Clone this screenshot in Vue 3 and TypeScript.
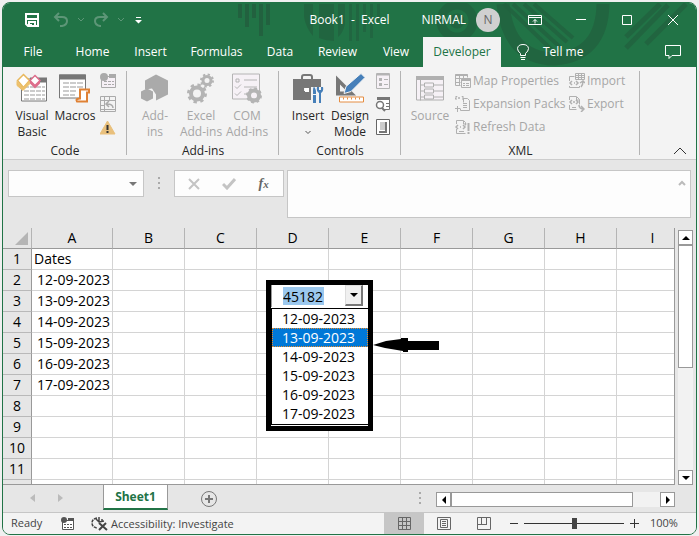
<script setup lang="ts">
import { ref } from 'vue'

const tabs = ['File', 'Home', 'Insert', 'Formulas', 'Data', 'Review', 'View', 'Developer']
const activeTab = ref('Developer')
const columns = ['A', 'B', 'C', 'D', 'E', 'F', 'G', 'H', 'I']
const dates = ['12-09-2023', '13-09-2023', '14-09-2023', '15-09-2023', '16-09-2023', '17-09-2023']
const rows = Array.from({ length: 11 }, (_, i) => ({
  number: i + 1,
  value: i === 0 ? 'Dates' : dates[i - 1] ?? '',
}))
const selected = ref('13-09-2023')
const comboValue = ref('45182')
const zoom = ref(100)
</script>

<template>
  <div class="window">
    <header class="top">
      <svg class="pattern" width="480" height="65" viewBox="216 2 480 65" aria-hidden="true">
        <g fill="#22613f">
          <path d="M238 3h4v14h-4zM245 3h4v23h-4zM252 3h4v14h-4zM259 3h4v32h-4zM266 3h4v21h-4z" />
          <path d="M304 3h9v32q-7-8-9-19zM319 3h15v37q-8 0-15-3zM338 3h7v20q-2 9-7 13z" opacity=".8" />
          <path d="M349 3h3v37h-3zM356 3h3v37h-3zM363 3h3v28h-3zM370 3h3v34h-3zM377 3h3v17h-3z" opacity=".7" />
        </g>
        <g fill="none" stroke="#22613f">
          <circle cx="457" cy="20" r="16" stroke-width="9" opacity=".8" />
          <circle cx="457" cy="20" r="5" stroke-width="5" opacity=".8" />
          <path d="M503 3q5 54 51 55q48-3 49-55" stroke-width="13" opacity=".8" />
          <path d="M504 3l50 48M513 3l47 43M524 3l43 38M534 3l39 34" stroke-width="4" opacity=".8" />
          <path d="M626 47l42-43M646 43l40-40M660 3l-34 33" stroke-width="5" opacity=".8" />
        </g>
      </svg>
      <div class="titlebar">
        <div class="quick">
          <button aria-label="Save" class="save"><svg width="16" height="16" viewBox="0 0 16 16" fill="none" stroke="#fff" stroke-width="2"><path d="M2 2h12v12H4l-2-2zM3 7h10M5 14v-4h6v4" /><path d="M7 12v2" /></svg></button>
          <button aria-label="Undo" class="faded"><svg width="16" height="16" viewBox="0 0 16 16" fill="none" stroke="currentColor" stroke-width="2"><path d="M6 1L2 5l4 4M2 5h7q5 0 5 4t-5 5H7" /></svg></button>
          <button aria-label="Undo history" class="faded small"><svg width="6" height="4" viewBox="0 0 6 4" fill="none" stroke="currentColor"><path d="M0 0l3 3 3-3" /></svg></button>
          <button aria-label="Redo" class="faded"><svg width="16" height="16" viewBox="0 0 16 16" fill="none" stroke="currentColor" stroke-width="2"><path d="M10 1l4 4-4 4M14 5H7Q2 5 2 9t5 5h1" /></svg></button>
          <button aria-label="Redo history" class="faded small"><svg width="6" height="4" viewBox="0 0 6 4" fill="none" stroke="currentColor"><path d="M0 0l3 3 3-3" /></svg></button>
          <button aria-label="Customize toolbar" class="custom"><svg width="7" height="7" viewBox="0 0 7 7" fill="#fff"><path d="M1 0h5v1H1zM0 3h7L3.500 6.500z" /></svg></button>
        </div>
        <div class="title">Book1&nbsp; -&nbsp; Excel</div>
        <div class="right">
          <button class="account"><span>NIRMAL</span><span class="avatar">N</span></button>
          <button class="win" aria-label="Ribbon display"><svg width="14" height="12" viewBox="0 0 14 12" fill="none" stroke="#fff"><path d="M.5 1.500h13v9H.5zM.5 3.500h13M7 9.500v-4M5 7.500l2-2 2 2" /></svg></button>
          <button class="win" aria-label="Minimize"><svg width="12" height="12" viewBox="0 0 12 12" stroke="#fff"><path d="M1 5.500h10" /></svg></button>
          <button class="win" aria-label="Maximize"><svg width="12" height="12" viewBox="0 0 12 12" fill="none" stroke="#fff"><path d="M1.500 1.500h9v9h-9z" /></svg></button>
          <button class="win" aria-label="Close"><svg width="12" height="12" viewBox="0 0 12 12" stroke="#fff"><path d="M1 1l10 10M11 1L1 11" /></svg></button>
        </div>
      </div>
      <nav class="tabs">
        <button v-for="t in tabs" :key="t" :class="{ active: t === activeTab }" @click="activeTab = t">{{ t }}</button>
        <button class="tell"><svg width="14" height="18" viewBox="0 0 14 18" fill="none" stroke="#fff"><path d="M4.500 12.500v-2Q1.500 8 1.500 5.500 2 1.500 7 1.500t5.500 4Q12.500 8 9.500 10.500v2zM4.500 14.500h5M5 16.500h4" /></svg>Tell me</button>
        <button class="comment" aria-label="Comments"><svg width="17" height="16" viewBox="0 0 17 16" fill="none" stroke="#fff"><path d="M.5 1.500h15v10H7l-3 3v-3H.5z" /></svg></button>
      </nav>
    </header>

    <section class="ribbon">
      <div class="group code">
        <div class="tools">
          <button class="big">
            <svg width="32" height="30" viewBox="0 0 32 30"><path d="M5.500 5.500h25v22h-25z" fill="#fff" stroke="#777" /><path d="M14 4h17v5H14z" fill="#777" /><path d="M8 13.500h21M8 17.500h21M8 21.500h21M8 25.500h21" stroke="#999" stroke-dasharray="5 1" /><path d="M7.500 1l6 6-6 7-6-7z" fill="#fff" stroke="#e8b85c" stroke-width="1.500" /><path d="M1 8l6 6 7-7v3l-7 7-6-5z" fill="#edc06b" stroke="#edc06b" /><path d="M19 2l5 5-5 5-5-5z" fill="#fff" stroke="#dd6e8c" stroke-width="1.500" /><path d="M14 7l5 5 5-5v3l-5 5-5-5z" fill="#dd6e8c" /></svg>
            <span>Visual<br>Basic</span>
          </button>
          <button class="big">
            <svg width="32" height="30" viewBox="0 0 32 30"><path d="M.5 1.500h26v23H.5z" fill="#fff" stroke="#777" /><path d="M0 1h27v5H0z" fill="#777" /><path d="M4 9.500h20M4 13.500h20M4 17.500h13M4 21.500h12" stroke="#999" stroke-dasharray="6 1" /><path d="M21 16h9v3h-2v9H18q-2-3 3-3z" fill="#fff" stroke="#df8135" stroke-width="2" /></svg>
            <span>Macros</span>
          </button>
          <div class="minis">
            <button aria-label="Record Macro"><svg width="16" height="16" viewBox="0 0 16 16"><path d="M1.500 3.500h14v11h-14z" fill="#f6f0f6" stroke="#aaa" /><path d="M9 1h7v4H9z" fill="#aaa" /><path d="M4 8.500h10M4 11.500h10" stroke="#aaa" stroke-dasharray="3 1" /><circle cx="4" cy="4" r="4" fill="#aaa" /></svg></button>
            <button aria-label="Relative references"><svg width="16" height="16" viewBox="0 0 16 16" fill="none" stroke="#aaa"><path d="M.5.5h15v15H.5zM4.500 0v16M0 4.500h16M9.500 0v4M0 9.500h4M0 13.500h16" /><path d="M13 12q0-4-6-4M9 5L6 8l3 3" stroke-width="1.500" /></svg></button>
            <button aria-label="Macro Security"><svg width="16" height="15" viewBox="0 0 16 15"><path d="M7.500 1L15 14H0z" fill="#e9c07c" stroke="#e9c07c" stroke-linejoin="round" /><path d="M6.500 5h2v5h-2zM6.500 11h2v2h-2z" fill="#333" /></svg></button>
          </div>
        </div>
        <div class="label">Code</div>
      </div>
      <div class="group addins">
        <div class="tools dim">
          <button class="big" disabled><svg width="28" height="30" viewBox="0 0 28 30" fill="#aaa"><path d="M15 1l12 6v14l-12 6V21l-4-6-7 1V7z" /><path d="M6 15l6 3v7l-6 3-6-3v-7z" /></svg><span>Add-<br>ins</span></button>
          <button class="big" disabled><svg width="28" height="30" viewBox="0 0 28 30" fill="none" stroke="#b4b4b4"><circle cx="10" cy="20" r="6" stroke-width="4" /><circle cx="10" cy="20" r="8.500" stroke-width="3" stroke-dasharray="3.300 3.400" /><circle cx="20" cy="7" r="4" stroke-width="3" /><circle cx="20" cy="7" r="6" stroke-width="2" stroke-dasharray="2.300 2.400" /></svg><span>Excel<br>Add-ins</span></button>
          <button class="big" disabled><svg width="32" height="30" viewBox="0 0 32 30" fill="none" stroke="#b4b4b4"><path d="M1.500.5h27v25h-27z" fill="#f6f1f6" /><path d="M13 6.500h13M13 13.500h13M13 20.500h5M5 5.500h3v3H5zM4 13l2 2 4-4M4 20l2 2 4-4" /><circle cx="23" cy="22" r="5" stroke-width="4" /><circle cx="23" cy="22" r="7" stroke-width="2" stroke-dasharray="2.800 2.700" /></svg><span>COM<br>Add-ins</span></button>
        </div>
        <div class="label">Add-ins</div>
      </div>
      <div class="group controls">
        <div class="tools">
          <button class="big"><svg width="32" height="31" viewBox="0 0 32 31"><path d="M10 7V4q0-2 2-2h6q2 0 2 2v3" fill="none" stroke="#777" stroke-width="2" /><path d="M1 6h28v9H1zM1 18h28v9H1zM1 14h11v5H1zM17 14h12v5H17z" fill="#777" /><path d="M13 15h4v4h-4z" fill="#fff" /><path d="M19 14h12v17H19z" fill="#f3f3f3" /><path d="M21 30v-8h3v8zM21 18q0-4 1-4t2 4v3h-3zM27 30V20q-3-2-2-6h2v3h2v-3h2q1 4-2 6v10z" fill="#467fb9" /></svg><span>Insert<br><svg class="chev" width="8" height="5" viewBox="0 0 8 5" fill="none" stroke="#555"><path d="M1.500 1L4 3.500 6.500 1" /></svg></span></button>
          <button class="big"><svg width="31" height="30" viewBox="0 0 31 30"><path d="M1 2l20 20H1zM5 11v7h7z" fill="#777" fill-rule="evenodd" /><path d="M9 20l2-7L26 0l4 4-14 14z" fill="#467fb9" stroke="#f3f3f3" /><path d="M4.500 23.500h24v5h-24z" fill="#fff" stroke="#e58d42" /><path d="M8.500 24v2M12.500 24v2M16.500 24v2M20.500 24v2M24.500 24v2" stroke="#e58d42" /></svg><span>Design<br>Mode</span></button>
          <div class="minis">
            <button aria-label="Properties"><svg width="14" height="16" viewBox="0 0 14 16" fill="none" stroke="#b4b4b4"><path d="M.5.5h13v15H.5z" fill="#f6f1f6" /><path d="M1 1.500h12" stroke-width="2" /><path d="M3 6.500h3M3 11.500h3" stroke-width="3" /><path d="M8 6.500h4M8 11.500h4" /></svg></button>
            <button aria-label="View Code"><svg width="16" height="16" viewBox="0 0 16 16" fill="none" stroke="#777"><path d="M2.500 1.500h12v12h-6" fill="#fff" /><path d="M2 2.500h13" stroke-width="3" /><path d="M11 7.500h3M11 10.500h3" /><circle cx="5" cy="9" r="3.500" fill="#fff" stroke-width="1.500" /><path d="M7 12l3 3" stroke-width="2" /></svg></button>
            <button aria-label="Run Dialog"><svg width="14" height="16" viewBox="0 0 14 16"><path d="M.5.5h13v15H.5z" fill="#fff" stroke="#666" /><path d="M3 12h6V3h2v11H3z" fill="#777" /><path d="M4 3h5v8H4z" fill="#ccc" /></svg></button>
          </div>
        </div>
        <div class="label">Controls</div>
      </div>
      <div class="group xml">
        <div class="tools dim">
          <button class="big" disabled><svg width="28" height="30" viewBox="0 0 28 30" fill="none" stroke="#b0b0b0"><path d="M.5 3.500h27v23H.5z" fill="#f6f1f6" /><path d="M0 4.500h28" stroke-width="4" /><path d="M4.500 6v21M4.500 11.500h4M4.500 17.500h4M4.500 23.500h4M8.500 9.500h9v4h-9zM8.500 15.500h9v4h-9zM8.500 21.500h9v4h-9zM18 11.500h9M18 17.500h9M18 23.500h9" /></svg><span>Source</span></button>
          <div class="list first">
            <button disabled><svg width="16" height="16" viewBox="0 0 16 16" fill="none" stroke="#b0b0b0"><path d="M.5 1.500h12v3M.5 1.500v11h5M4.500 2v10M8.500 2v3M.5 5.500h6M.5 9.500h5M6.500 5.500h9v9h-9z" /><path d="M.5 2h12M7 7h8" stroke-width="2" /><path d="M8 10.500h2M11 10.500h3M8 12.500h2M11 12.500h3" /></svg>Map Properties</button>
            <button disabled><svg width="16" height="16" viewBox="0 0 16 16" fill="none" stroke="#b0b0b0"><path d="M8.500 6.500V2.500h4l2 2v10h-9v-2M8 7.500h4M8 9.500h4M8 11.500h4M0 12.500h5M2.500 10v6" /><path d="M2 0L0 2l2 2M7 0l2 2-2 2M3 2h3" stroke-width="1.500" stroke-dasharray="2 1" /></svg>Expansion Packs</button>
            <button disabled><svg width="16" height="16" viewBox="0 0 16 16" fill="none" stroke="#b0b0b0"><path d="M1.500 5V1.500h7l2 2v3M1.500 10v4.500h9M8.500 2v3h3M4 12.500h5" /><path d="M3 6L1 8l2 2M8 6l2 2-2 2M5 8h1" stroke-width="1.500" /><path d="M13.500 4v8M13.500 13v2" stroke-width="2" /></svg>Refresh Data</button>
          </div>
          <div class="list">
            <button disabled><svg width="16" height="16" viewBox="0 0 16 16" fill="none" stroke="#b0b0b0"><path d="M.5 8V3.500h5M.5 13v1.500h10V13M6.500.5h9v6h-9zM6.500 2.500h9M6.500 4.500h9M9.500 1v5M12.500 1v5" /><path d="M3 8l-2 2 2 2M7 8l2 2-2 2M5 10h1M12 14q2-2 2-6M11 10l3-2 2 2" stroke-width="1.500" /></svg>Import</button>
            <button disabled><svg width="16" height="16" viewBox="0 0 16 16" fill="none" stroke="#b0b0b0"><path d="M.5 4V.5h7l3 3v5M.5 9v4.500h7M7.500 1v3h3M3 11.500h4" /><path d="M3 4L1 6l2 2M7 4l2 2-2 2M4 6h2M10 9q0 4 5 4M12 10l3 3-3 3" stroke-width="1.500" /></svg>Export</button>
          </div>
        </div>
        <div class="label">XML</div>
      </div>
      <button class="collapse" aria-label="Collapse ribbon"><svg width="14" height="8" viewBox="0 0 14 8" fill="none" stroke="#333"><path d="M1 7l6-6 6 6" /></svg></button>
    </section>

    <section class="formula">
      <div class="namebox"><input aria-label="Name Box"><button aria-label="Names"><svg width="8" height="4" viewBox="0 0 8 4" fill="#777"><path d="M0 0h8L4 4z" /></svg></button></div>
      <span class="dots"><i /><i /><i /></span>
      <div class="fx">
        <button aria-label="Cancel"><svg width="12" height="12" viewBox="0 0 12 12" stroke="#c4c4c4" stroke-width="2"><path d="M1 1l10 10M11 1L1 11" /></svg></button>
        <button aria-label="Enter"><svg width="14" height="12" viewBox="0 0 14 12" fill="none" stroke="#c4c4c4" stroke-width="3"><path d="M1 6l4 4 8-9" /></svg></button>
        <button class="fn" aria-label="Insert Function"><i>f<small>x</small></i></button>
      </div>
      <div class="bar"><textarea aria-label="Formula Bar" /><svg width="8" height="6" viewBox="0 0 8 6" fill="none" stroke="#bbb" stroke-width="2"><path d="M1 5l3-3 3 3" /></svg></div>
    </section>

    <main class="work">
      <div class="sheet">
        <table>
          <colgroup><col class="c-num"><col class="c-a"><col v-for="n in 8" :key="n" class="c-n"></colgroup>
          <thead>
            <tr><th class="corner" aria-label="Select all"><svg width="13" height="13" viewBox="0 0 13 13"><path d="M13 0v13H0z" fill="#b5b5b5" /></svg></th><th v-for="c in columns" :key="c" scope="col">{{ c }}</th></tr>
          </thead>
          <tbody>
            <tr v-for="r in rows" :key="r.number">
              <th scope="row">{{ r.number }}</th>
              <td :class="{ date: r.number > 1 }">{{ r.value }}</td>
              <td v-for="n in 8" :key="n" />
            </tr>
            <tr><th /><td v-for="n in 9" :key="n" /></tr>
          </tbody>
        </table>
        <div class="combo">
          <div class="field"><input v-model="comboValue" aria-label="Date" size="5"><button aria-label="Open list"><svg width="8" height="4" viewBox="0 0 8 4"><path d="M0 0h8L4 4z" /></svg></button></div>
          <ul role="listbox" aria-label="Dates">
            <li v-for="d in dates" :key="d" role="option" :aria-selected="d === selected" :class="{ on: d === selected }" @click="selected = d">{{ d }}</li>
          </ul>
        </div>
        <svg class="arrow" width="67" height="16" viewBox="0 0 67 16"><path d="M0 8L13 4 28 2V1h7v3h31v9H35v2h-5v-1L12 11z" /></svg>
      </div>
      <div class="vscroll">
        <button aria-label="Scroll up"><svg width="8" height="4" viewBox="0 0 8 4"><path d="M0 4l4-4 4 4z" /></svg></button>
        <div class="thumb" />
        <button class="end" aria-label="Scroll down"><svg width="8" height="4" viewBox="0 0 8 4"><path d="M0 0h8L4 4z" /></svg></button>
      </div>
    </main>

    <footer class="sheets">
      <div class="arrows">
        <button aria-label="Previous sheet"><svg width="5" height="8" viewBox="0 0 5 8" fill="#bbb"><path d="M5 0v8L0 4z" /></svg></button>
        <button aria-label="Next sheet"><svg width="5" height="8" viewBox="0 0 5 8" fill="#bbb"><path d="M0 0v8l5-4z" /></svg></button>
      </div>
      <button class="sheet-tab">Sheet1</button>
      <button class="add" aria-label="New sheet"><svg width="16" height="16" viewBox="0 0 16 16" fill="none" stroke="#777"><circle cx="8" cy="8" r="7.500" /><path d="M8 4v8M4 8h8" stroke-width="2" /></svg></button>
      <span class="dots"><i /><i /><i /></span>
      <div class="hscroll">
        <button aria-label="Scroll left"><svg width="4" height="8" viewBox="0 0 4 8"><path d="M4 0v8L0 4z" /></svg></button>
        <div class="thumb" />
        <button class="end" aria-label="Scroll right"><svg width="4" height="8" viewBox="0 0 4 8"><path d="M0 0v8l4-4z" /></svg></button>
      </div>
    </footer>

    <footer class="status">
      <span class="ready">Ready</span>
      <button aria-label="Macro recording"><svg width="14" height="14" viewBox="0 0 14 14"><path d="M1.500 3.500h11v9h-11z" fill="#fff" stroke="#555" /><path d="M7 1h6v3H7z" fill="#555" /><path d="M3 7.500h9M3 10.500h9" stroke="#555" stroke-dasharray="2 1" /><circle cx="3" cy="3" r="3" fill="#555" /></svg></button>
      <button class="access"><svg width="17" height="16" viewBox="0 0 17 16" fill="none" stroke="#444"><path d="M6 2Q1 3 1 7t5 5" stroke-dasharray="3 1" stroke-width="1.500" /><path d="M8 1v5M5 3l3 3 5-1M11 3v3" stroke-width="1.500" /><path d="M8 7l8 7M15 7l-7 7" stroke-width="2" /></svg>Accessibility: Investigate</button>
      <div class="views">
        <button class="on" aria-label="Normal view"><svg width="13" height="13" viewBox="0 0 13 13" fill="none" stroke="#666"><path d="M.5.5h12v12H.5zM4.500 0v13M8.500 0v13M0 4.500h13M0 8.500h13" /></svg></button>
        <button aria-label="Page Layout"><svg width="14" height="13" viewBox="0 0 14 13" fill="none" stroke="#666"><path d="M.5.5h13v12H.5zM3.500 2.500h7v8h-7zM5 4.500h4M5 6.500h4M5 8.500h4" /></svg></button>
        <button aria-label="Page Break Preview"><svg width="14" height="13" viewBox="0 0 14 13" fill="none" stroke="#666"><path d="M.5.5h13v12H.5zM4.500 0v7M9.500 0v7M0 7.500h10" /></svg></button>
      </div>
      <button class="zb" aria-label="Zoom out"><svg width="8" height="9" viewBox="0 0 8 9" stroke="#333"><path d="M0 4.500h8" /></svg></button>
      <input v-model.number="zoom" type="range" min="0" max="200" aria-label="Zoom">
      <button class="zb" aria-label="Zoom in"><svg width="9" height="9" viewBox="0 0 9 9" stroke="#333"><path d="M0 4.500h9M4.500 0v9" /></svg></button>
      <span class="pct">{{ zoom }}%</span>
    </footer>
  </div>
</template>

<style>
body { margin: 0; background: #f0f0f0; }
</style>

<style scoped>
* { box-sizing: border-box; }
button, input, textarea { font: inherit; color: inherit; border: 0; background: none; padding: 0; margin: 0; outline: 0; }
button { display: flex; align-items: center; justify-content: center; white-space: nowrap; }
svg { display: block; flex: none; }
.window { height: calc(100vh - 3px); margin: 2px 2px 1px; border: 1px solid #217346; border-radius: 8px; overflow: hidden; display: flex; flex-direction: column; background: #e6e6e6; font: 12px/16px "Open Sans", "Noto Sans", sans-serif; color: #262626; }
.top { position: relative; background: #217346; color: #fff; flex: none; }
.pattern { position: absolute; top: 0; right: 0; }
.titlebar { position: relative; display: grid; grid-template-columns: 1fr auto 1fr; height: 34px; align-items: center; }
.quick { display: flex; align-items: center; padding-left: 21px; }
.save { margin-right: 13px; }
.faded { color: #5d9677; }
.small { width: 24px; }
.custom { margin-left: 2px; }
.right { display: flex; justify-content: flex-end; align-items: center; }
.account { gap: 10px; }
.avatar { width: 24px; height: 24px; line-height: 24px; border-radius: 50%; background: #d0d0d0; color: #666; }
.win { width: 46px; height: 30px; }
.account + .win { margin-left: 12px; }
.tabs { position: relative; display: grid; grid-template-columns: 60px 59px 57px 75px 52px 63px 54px 78px auto 1fr; height: 30px; }
.tabs .active { background: #f3f3f3; color: #217346; }
.tell { gap: 13px; padding-left: 15px; }
.tabs .comment { justify-content: flex-end; padding-right: 14px; }
.ribbon { flex: none; display: flex; height: 93px; background: #f3f3f3; border-bottom: 1px solid #cdcdcd; padding-top: 4px; }
.group { display: flex; flex-direction: column; justify-content: space-between; background: linear-gradient(#b4b4b4, #b4b4b4) right top / 1px 84px no-repeat; }
.tools { display: flex; height: 68px; padding-top: 2px; }
.label { text-align: center; }
.big { flex-direction: column; justify-content: flex-start; text-align: center; gap: 4px; }
.big > svg { height: 31px; }
.chev { margin: 6px auto; }
.minis { display: flex; flex-direction: column; gap: 7px; }
.minis button { width: 16px; height: 16px; }
.code { width: 124px; }
.code .tools { padding-left: 12px; }
.code .big:first-child { width: 34px; }
.code .big + .big { width: 46px; margin-left: 3px; }
.code .minis { margin-left: 2px; }
.dim { color: #a6a6a6; }
.addins { width: 152px; }
.addins .big { width: 46px; }
.addins .tools { padding-left: 5px; }
.controls { width: 122px; }
.controls .tools { padding-left: 9px; }
.controls .big { width: 40px; }
.controls .big + .big { margin-left: 2px; }
.controls .minis { margin-left: 5px; }
.xml { width: 239px; }
.xml .tools { padding-left: 10px; }
.xml .big { width: 38px; }
.list { display: flex; flex-direction: column; gap: 7px; margin-left: 6px; }
.list.first { width: 108px; }
.list button { height: 16px; gap: 2px; justify-content: flex-start; }
.collapse { margin-left: auto; align-self: flex-end; width: 32px; height: 16px; }
.formula { flex: none; display: flex; height: 68px; padding: 10px 5px 0; }
.namebox, .fx, .bar { border: 1px solid #c6c6c6; background: #fdfdfd; display: flex; height: 27px; }
.namebox { width: 136px; }
.namebox input { flex: 1; min-width: 0; padding: 0 6px; }
.namebox button { width: 20px; }
.dots { display: flex; flex-direction: column; justify-content: center; align-items: center; gap: 3px; height: 26px; width: 30px; }
.dots i { width: 2px; height: 2px; background: #aaa; }
.fx { width: 110px; justify-content: space-around; padding: 0 2px; }
.fx button { width: 30px; }
.fn { font: bold 14px "Liberation Serif", serif; color: #666; }
.fn small { font-size: 11px; }
.bar { flex: 1; margin-left: 3px; height: 48px; padding: 9px 4px; }
.bar textarea { flex: 1; resize: none; min-width: 0; }
.work { flex: 1; min-height: 0; display: flex; gap: 3px; }
.sheet { position: relative; flex: 1; overflow: hidden; border-right: 1px solid #999; border-bottom: 1px solid #999; background: #fff; }
table { width: 686px; table-layout: fixed; border-collapse: separate; border-spacing: 0; font-size: 14px; line-height: 20px; color: #000; }
.c-num { width: 29px; }
.c-a { width: 81px; }
.c-n { width: 72px; }
th, td { padding: 0; height: 21px; font-weight: 400; border-right: 1px solid #d4d4d4; border-bottom: 1px solid #d4d4d4; }
th { background: #e6e6e6; text-align: center; }
thead th { border-right-color: #b4b4b4; border-bottom-color: #999; }
tbody th { border-right-color: #999; border-bottom-color: #b9b9b9; }
.corner svg { margin: 0 3px 0 auto; }
td { padding-left: 2px; white-space: nowrap; }
.date { padding: 0 2px 0 0; text-align: right; }
.combo { position: absolute; left: 263px; top: 52px; width: 107px; border: 5px solid #000; background: #fff; font-size: 14px; line-height: 19px; color: #000; }
.field { display: flex; justify-content: space-between; height: 22px; padding: 0 5px 1px 11px; border-left: 1px solid #999; }
.field input { width: 41px; height: 18px; margin-top: 2px; background: #9bc8ee; }
.field button { width: 18px; background: #f0f0f0; border: 1px solid #ddd; border-right: 2px solid #777; border-bottom: 2px solid #777; }
ul { list-style: none; margin: 1px 0; padding: 0 0 1px; border: 1px solid #000; border-width: 1px 0 1px 1px; }
li { text-align: center; padding-right: 3px; cursor: default; }
.on[role="option"] { background: #0078d7; color: #fff; outline: 1px dotted #e88a2a; outline-offset: -1px; }
.arrow { position: absolute; left: 370px; top: 109px; }
.vscroll { width: 15px; margin: 2px 3px 0 0; display: flex; flex-direction: column; background: #f2f2f2; }
.vscroll button, .hscroll button { flex: none; width: 15px; height: 15px; border: 1px solid #999; background: #fff; }
.end { margin-top: auto; }
.vscroll .thumb { height: 123px; border: 1px solid #999; background: #fff; }
.sheets { flex: none; display: flex; height: 28px; align-items: flex-start; border-bottom: 1px solid #c6c6c6; }
.arrows { display: flex; width: 100px; height: 26px; padding-left: 27px; gap: 23px; }
.sheet-tab { width: 65px; height: 25px; background: #fff; border: 1px solid #999; border-top: 0; border-bottom: 2px solid #217346; color: #217346; font-weight: 700; }
.add { margin-left: 33px; height: 27px; }
.sheets .dots { margin-left: auto; }
.hscroll { display: flex; width: 239px; margin: 7px 21px 0 1px; background: #f2f2f2; }
.hscroll .thumb { width: 182px; height: 15px; border: 1px solid #999; background: #fff; }
.hscroll .end { margin: 0 0 0 auto; }
.status { flex: none; display: flex; height: 21px; background: #f3f3f3; align-items: stretch; line-height: 20px; color: #444; font-size: 11px; }
.ready { width: 58px; padding-left: 8px; }
.access { margin-left: 16px; gap: 3px; }
.views { display: flex; margin-left: auto; }
.views button { width: 40px; }
.views .on { background: #c6c6c6; }
.zb { width: 20px; }
.status input { appearance: none; width: 100px; align-self: center; height: 11px; background: linear-gradient(#333, #333) center / 100% 1px no-repeat; }
.status input::-webkit-slider-thumb { appearance: none; width: 5px; height: 11px; background: #444; }
.pct { width: 52px; padding-left: 6px; }
</style>
